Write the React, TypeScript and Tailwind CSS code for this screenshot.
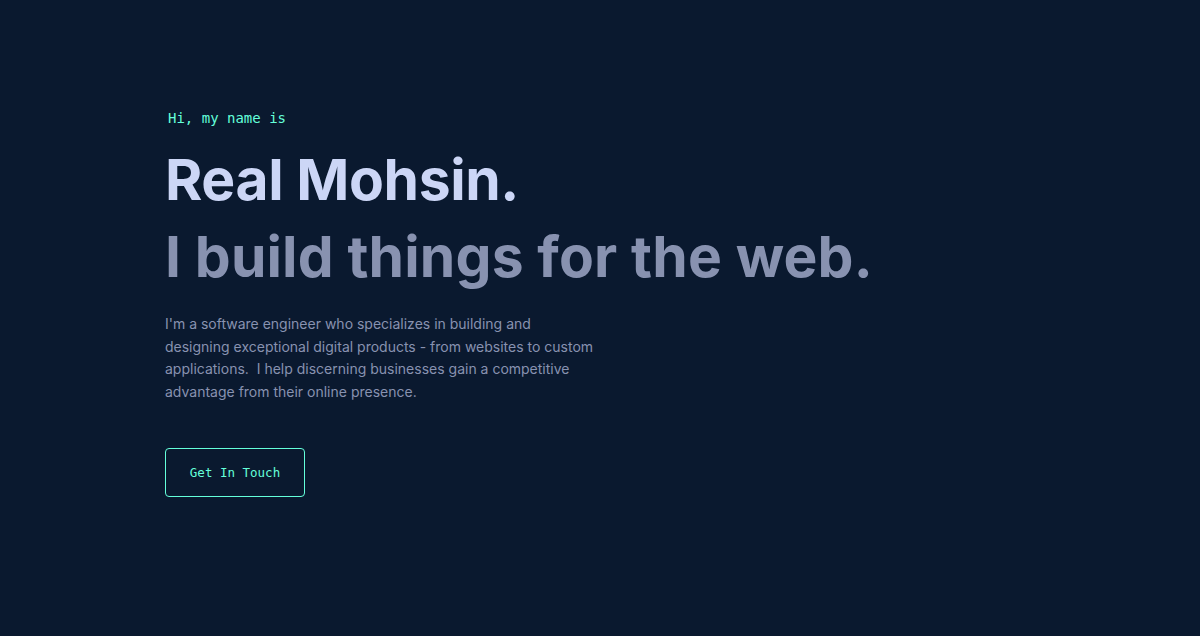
import React from 'react';

export default function App() {
  return (
    <div className="min-h-screen w-full bg-[#0a192f] overflow-hidden">
      <section className="flex flex-col items-start pl-[165px] pt-[108px] font-['Inter',sans-serif]">
        <h1 className="ml-[3px] mb-[17px] font-['DejaVu_Sans_Mono',monospace] text-[14px] leading-[20px] text-[#64ffda] font-normal">
          Hi, my name is
        </h1>
        <h2 className="text-[57px] leading-[70px] font-bold tracking-[-0.4px] text-[#ccd6f6]">
          Real Mohsin.
        </h2>
        <h3 className="mt-[7px] text-[57px] leading-[70px] font-bold tracking-[0.15px] text-[#8892b0]">
          I build things for the web.
        </h3>
        <p className="mt-[21px] text-[14px] leading-[22.6px] text-[#8892b0] whitespace-nowrap">
          I'm a software engineer who specializes in building and
          <br />
          designing exceptional digital products - from websites to custom
          <br />
          applications.&nbsp; I help discerning businesses gain a competitive
          <br />
          advantage from their online presence.
        </p>
        <a
          href="#contact"
          className="mt-[45px] flex h-[49px] w-[140px] items-center justify-center rounded-[4px] border border-[#64ffda] font-['DejaVu_Sans_Mono',monospace] text-[12.5px] text-[#64ffda]"
        >
          Get In Touch
        </a>
      </section>
    </div>
  );
}
